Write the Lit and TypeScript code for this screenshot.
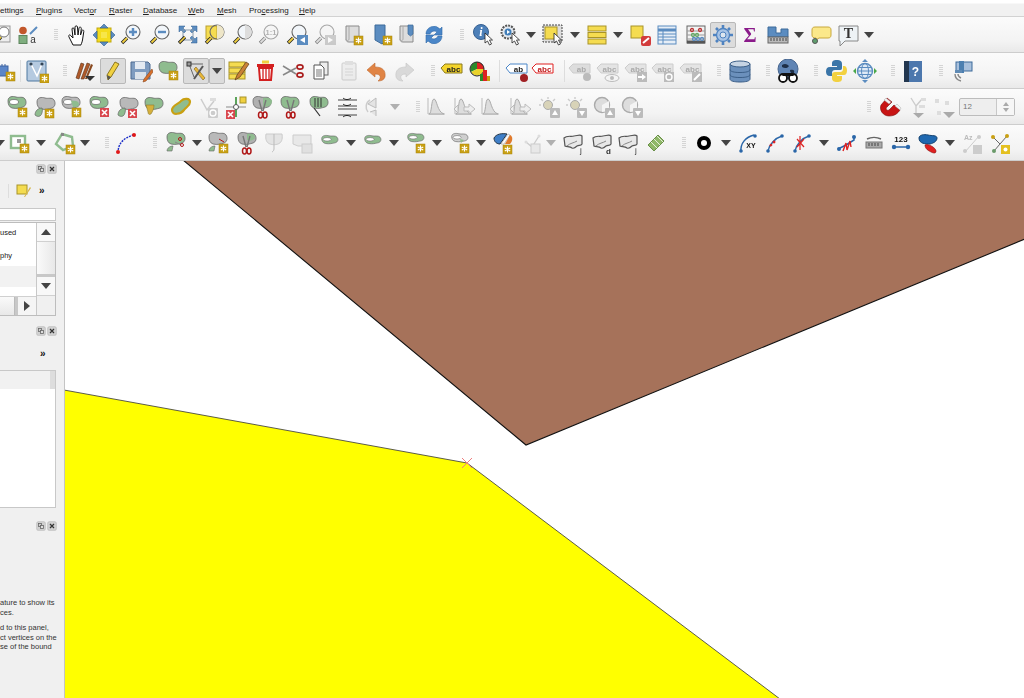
import { LitElement, html, css, svg, nothing } from 'lit';
import { customElement } from 'lit/decorators.js';

const G = '#8fbc8f';
const BLUE = '#5b8cc0';
const YEL = '#f5dc50';

// small shared drawing parts, all in a 24x24 box
const blob = (fill = G, tf = '') =>
  svg`<path transform=${tf} d="M3 8C3 3 8 3 11 4s7-1 9 2c2 3 1 7-2 8-4 1-6 2-11 1-3-1-4-4-4-7Z" fill=${fill} stroke="#666" stroke-width=".8"/>`;
const ring = (tf = '', fill = G) =>
  svg`<g transform=${tf}>${blob(fill)}<ellipse cx="9" cy="9" rx="4.5" ry="2.500" fill="#fff" stroke="#666" stroke-width=".7"/></g>`;
const grayGreen = () =>
  svg`${blob('#b9b9b9', 'translate(2,-1)')}<path d="M3 20c0-4 3-7 7-7 1 2 0 7-2 8s-4 0-5-1Z" fill=${G} stroke="#666" stroke-width=".7"/>`;
const star = (x = 14, y = 14) =>
  svg`<rect x=${x} y=${y} width="9" height="9" fill="#c9a012" stroke="#a88510" stroke-width=".5"/><path d=${`M${x + 4.5} ${y + 1.5}v6M${x + 1.8} ${y + 3}l5.4 3M${x + 7.2} ${y + 3}l-5.4 3`} stroke="#fff" stroke-width="1.2"/>`;
const redX = (x = 14, y = 14) =>
  svg`<rect x=${x} y=${y} width="9" height="9" fill="#d9484f"/><path d=${`M${x + 2} ${y + 2}l5 5M${x + 7} ${y + 2}l-5 5`} stroke="#fff" stroke-width="1.6"/>`;
const mag = (inner: unknown = nothing, fill = '#f2f6fa') =>
  svg`<path d="M8 15 3 20" stroke="#222" stroke-width="3.4"/><path d="M8 15 3.5 19.5" stroke="#f0cf40" stroke-width="1.8"/><circle cx="14" cy="9" r="7" fill=${fill} stroke="#666" stroke-width="1.1"/>${inner}`;
const cursor = (x = 13, y = 10) =>
  svg`<path transform=${`translate(${x},${y})`} d="M0 0v10l2.5-2 2 4 2-1-2-4h3Z" fill="#fff" stroke="#222" stroke-width=".8"/>`;
const scissors = (x = 0, y = 0, c = '#b01818') =>
  svg`<g transform=${`translate(${x},${y})`}><path d="M8 1 11 12M15 1 12 12" stroke="#777" stroke-width="1.4"/><ellipse cx="9.5" cy="16" rx="2" ry="3" fill="none" stroke=${c} stroke-width="1.5"/><ellipse cx="14" cy="16" rx="2" ry="3" fill="none" stroke=${c} stroke-width="1.5"/></g>`;
const page = (f = '#ddd') =>
  svg`<path d="M5 3h13v16H8c-2 0-3-1-3-3Z" fill=${f} stroke="#8a8a8a"/><path d="M8 3v13c0 2-3 2-3 0" fill="none" stroke="#aaa"/>`;
const tag = (fill: string, stroke: string, txt = 'abc', col = '#222') =>
  svg`<path d="M1 9 5 5h17v9H5Z" fill=${fill} stroke=${stroke}/><text x="13.5" y="12.6" text-anchor="middle" font-family="Liberation Sans" font-weight="700" font-size="8" fill=${col}>${txt}</text>`;
const hist = () =>
  svg`<path d="M3 3v16h17" fill="none" stroke="#bbb"/><path d="M4 19C7 19 6 4 9 4s3 13 10 15Z" fill="#ddd" stroke="#aaa"/>`;
const sun = () =>
  svg`<circle cx="11" cy="10" r="4.5" fill="#d8d3b8" stroke="#aaa"/><path d="M11 2v2M4 4l2 2M18 4l-2 2M2 10h2" stroke="#ccc" stroke-width="1.4"/>`;
const badge = (up: boolean) =>
  svg`<rect x="13" y="13" width="10" height="10" rx="1" fill="#bbb"/><path d=${up ? 'M18 15l3 5h-6Z' : 'M18 21l3-5h-6Z'} fill="#fff"/>`;
const disc = () =>
  svg`<circle cx="10" cy="10" r="7.5" fill="#ddd" stroke="#aaa" stroke-width="1.4"/><path d="M10 10 17 6v10l-7 1Z" fill="#f4f4f4"/>`;
const nodeLine = (c = '#2a66a8') =>
  svg`<circle cx="5" cy="20" r="1.8" fill=${c}/><circle cx="19" cy="5" r="1.8" fill=${c}/>`;
const wavy = () =>
  svg`<path d="M3 7c3-3 7-1 10-2 3 0 6-2 8 0v8c-1 2-3 1-5 2-2 2-3 3-5 2-2-2-5-1-7-2Z" fill="#e8e8e8" stroke="#555" stroke-width="1.200"/><path d="M6 15c3-3 7-3 10-5" fill="none" stroke="#888"/>`;

const ICONS: Record<string, () => unknown> = {
  tips: () => svg`<rect x="2" y="3" width="15" height="16" fill="#eee" stroke="#999"/><circle cx="11" cy="9" r="5" fill="#fff" stroke="#777"/><path d="M8 14l-5 6" stroke="#222" stroke-width="3"/><path d="M8 14l-5 6" stroke="#e9c93c" stroke-width="1.5"/>`,
  style: () => svg`<circle cx="7" cy="7.5" r="3.8" fill="#c2572b"/><path d="M14 11 21 4" stroke=${BLUE} stroke-width="2"/><rect x="3" y="12.5" width="8" height="8" fill="#7fae7f" stroke="#5d855d"/><text x="17" y="20" text-anchor="middle" font-family="Liberation Sans" font-size="10" fill="#333">a</text>`,
  hand: () => svg`<path d="M8 22 4 14c-1-2 1-3 2-1l2 2L7 6c0-1.5 2-1.5 2.2 0L10 12V4c0-1.5 2.500-1.500 2.500 0L13 12l1-7c.3-1.500 2.500-1 2.300.5L15.500 12 17 7.500c.5-1 2-.5 1.800 1L17.500 17c-.5 3-1.500 4-1.500 5Z" fill="#fff" stroke="#111" stroke-width="1"/>`,
  panSel: () => svg`<rect x="5" y="5" width="14" height="14" fill="#f4dc1c" stroke="#c0a810"/><rect x="9" y="9" width="6" height="6" fill="#f7e64a"/><path d="M12 1l4 4H8ZM12 23l4-4H8ZM1 12l4-4v8ZM23 12l-4-4v8Z" fill=${BLUE} stroke="#30608f" stroke-width=".6"/>`,
  zoomIn: () => mag(svg`<path d="M14 5v8M10 9h8" stroke=${BLUE} stroke-width="2.400"/>`),
  zoomOut: () => mag(svg`<path d="M10 9h8" stroke=${BLUE} stroke-width="2.400"/>`),
  zoomFull: () => svg`<path d="M3 3h6L7 5l3 3-2 2-3-3-2 2ZM21 3h-6l2 2-3 3 2 2 3-3 2 2ZM21 20h-6l2-2-3-3 2-2 3 3 2-2Z" fill=${BLUE} stroke="#2f5f90" stroke-width=".5"/><rect x="7" y="7" width="10" height="10" fill="none" stroke="#89a"/><path d="M9 14 3 20" stroke="#222" stroke-width="3.200"/><path d="M9 14 3.500 19.500" stroke="#f0cf40" stroke-width="1.600"/>`,
  zoomSel: () => svg`<rect x="3" y="3" width="11" height="13" fill=${YEL} stroke="#b9a030"/>${mag(svg`<path d="M14 2a7 7 0 0 1 0 14Z" fill="#eee6c8"/>`, 'none')}`,
  zoomLayer: () => mag(svg`<path d="M14 2a7 7 0 0 1 0 14Z" fill="#ddd"/>`),
  zoomNative: () => mag(svg`<text x="14" y="12" text-anchor="middle" font-family="Liberation Sans" font-weight="700" font-size="7.500" fill="#777">1:1</text>`),
  zoomLast: () => svg`${mag()}<rect x="12" y="12" width="11" height="10" fill=${BLUE}/><path d="M20 14v6l-5-3Z" fill="#fff"/>`,
  zoomNext: () => svg`${mag()}<rect x="12" y="12" width="11" height="10" fill="#aaa"/><path d="M15 14v6l5-3Z" fill="#fff"/>`,
  mapView: () => svg`${page()}${star(13, 13)}`,
  bookmark: () => svg`<path d="M5 2h10v16l-3 3-7-4Z" fill=${BLUE} stroke="#3c6a9a"/>${star(13, 13)}`,
  bookmarks: () => svg`${page()}<path d="M13 2h5v9l-2.500 2-2.500-2Z" fill=${BLUE} stroke="#3c6a9a" stroke-width=".7"/>`,
  refresh: () => svg`<path d="M4 11a8 8 0 0 1 14-5l2-2v8h-8l3-3a4.500 4.500 0 0 0-7 2ZM20 13a8 8 0 0 1-14 5l-2 2v-8h8l-3 3a4.500 4.500 0 0 0 7-2Z" fill="#4a86c8" stroke="#2f6aa8" stroke-width=".6"/>`,
  identify: () => svg`<circle cx="10" cy="9" r="7.500" fill="#4c7fb8" stroke="#355f90"/><text x="10" y="13" text-anchor="middle" font-family="Liberation Serif" font-style="italic" font-weight="700" font-size="12" fill="#fff">i</text>${cursor(14, 10)}`,
  action: () => svg`<circle cx="10" cy="9" r="6.500" fill="#e4e9ef" stroke="#555" stroke-width="2" stroke-dasharray="2 1"/><circle cx="10" cy="9" r="3.500" fill="#3f7db8"/><path d="M9 7v4l3-2Z" fill="#fff"/>${cursor(14, 10)}`,
  select: () => svg`<rect x="2" y="2" width="19" height="17" fill="#ddd" stroke="#444" stroke-dasharray="2 1"/><rect x="4" y="4" width="12" height="12" fill=${YEL} stroke="#a89328"/>${cursor(13, 10)}`,
  selectAttr: () => svg`<g fill=${YEL} stroke="#a89328"><rect x="3" y="3" width="18" height="5"/><rect x="3" y="9.500" width="18" height="5"/><rect x="3" y="16" width="18" height="5"/></g>`,
  deselect: () => svg`<rect x="3" y="3" width="12" height="12" fill=${YEL} stroke="#a89328"/><rect x="13" y="13" width="10" height="10" rx="2" fill="#d23c3c"/><path d="M15 20l6-5" stroke="#fff" stroke-width="2"/>`,
  table: () => svg`<rect x="3" y="3" width="18" height="18" fill="#e6eef7" stroke=${BLUE}/><path d="M3 7h18" stroke=${BLUE} stroke-width="3"/><path d="M3 11h18M3 14h18M3 17h18M8 8v13" stroke=${BLUE}/>`,
  abacus: () => svg`<rect x="3" y="3" width="18" height="17" fill="#f2f2f2" stroke="#666"/><path d="M3 19h18" stroke="#555" stroke-width="3"/><path d="M3 8h18M3 12h18M3 16h18" stroke="#999"/><g fill="none" stroke-width="1.300"><g stroke="#b33"><circle cx="8" cy="7" r="1.500"/><circle cx="16" cy="7" r="1.500"/></g><g stroke="#6a6"><circle cx="9" cy="12" r="1.500"/><circle cx="13" cy="12" r="1.500"/></g><g stroke=${BLUE}><circle cx="10" cy="16" r="1.500"/><circle cx="14" cy="16" r="1.500"/><circle cx="18" cy="16" r="1.500"/></g></g>`,
  gear: () => svg`<circle cx="12" cy="12" r="6.500" fill="#a8c4e6" stroke="#4f83c0" stroke-width="1.300"/><circle cx="12" cy="12" r="3" fill="#dde6ef" stroke="#4f83c0"/><path d="M12 2v3M12 19v3M2 12h3M19 12h3M5 5l2 2M17 17l2 2M19 5l-2 2M7 17l-2 2" stroke="#4f83c0" stroke-width="2.600"/>`,
  sigma: () => svg`<text x="12" y="19" text-anchor="middle" font-family="Liberation Serif" font-weight="700" font-size="20" fill="#8a1a8a">Σ</text>`,
  measure: () => svg`<path d="M2 4h8v6h5V6h7v8H2Z" fill=${BLUE} stroke="#3c6a9a"/><rect x="2" y="14" width="20" height="6" fill="#bbb" stroke="#666"/><path d="M5 15v3M8 15v3M11 15v3M14 15v3M17 15v3M20 15v3" stroke="#444"/>`,
  tip: () => svg`<path d="M3 7c0-2 1-3 3-3h13c2 0 3 1 3 3v5c0 2-1 3-3 3H10l-3 2v-2c-3 0-4-1-4-3Z" fill="#fbe88a" stroke="#c8a83c"/><circle cx="6" cy="18" r="2.500" fill="#5f9e6e" stroke="#555"/>`,
  annot: () => svg`<path d="M3 3h19v15H9l-5 5v-5H3Z" fill="#eef3f6" stroke="#888"/><text x="12.500" y="15" text-anchor="middle" font-family="Liberation Serif" font-weight="700" font-size="14" fill="#333">T</text>`,

  chip: () => svg`<rect x="1" y="7" width="14" height="10" fill="#5b86c8" stroke="#3c62a0"/><path d="M3 5v2M6 5v2M9 5v2M12 5v2M3 17v2M6 17v2" stroke="#3c62a0"/>${star(13, 13)}`,
  vertex: () => svg`<rect x="2" y="2" width="19" height="20" rx="1" fill="#b5cae0" stroke="#4f78a0"/><path d="M6 5 12 17 17 5" fill="none" stroke="#fff" stroke-width="1.500"/><circle cx="6" cy="5" r="1.600" fill="#345"/><circle cx="17" cy="5" r="1.600" fill="#345"/>${star(15, 15)}`,
  pencils: () => svg`<path d="M3 19 8 4l3 1-5 15ZM8 20 14 4l3 1-6 15Z" fill="#b05a2a" stroke="#5a3016" stroke-width=".6"/><path d="M12 20 18 5l2 1-6 14Z" fill="#8a4a20"/><path d="M12 17h10l-5 5Z" fill="#333"/>`,
  pencil: () => svg`<path d="M7 21 6 16 14 3l4 2-8 13Z" fill="#f0d040" stroke="#8a7420"/><path d="M7 21l-1-5 4 2Z" fill="#555"/>`,
  save: () => svg`<path d="M2 3h17l2 2v15H2Z" fill="#7f9cc0" stroke="#4f6a90"/><rect x="6" y="3" width="10" height="7" fill="#e4eaf2"/><rect x="6" y="13" width="11" height="7" fill="#dbe2ea"/><path d="M23 10 15 20l-1 3 3-1 7-9Z" fill="#d8702c" stroke="#8a4a20" stroke-width=".6"/>`,
  addPoly: () => svg`${blob(G, 'translate(0,-1)')}${star(13, 12)}`,
  digitize: () => svg`<path d="M5 5 10 18M5 5h14" stroke="#666"/><rect x="3" y="3" width="4" height="4" fill="#999" stroke="#333"/><path d="M12 8 21 19l-2 2L10 10Z" fill="#e9b838" stroke="#7a6020" stroke-width=".6"/><path d="M19 7 10 20" stroke="#555" stroke-width="2"/>`,
  multiEdit: () => svg`<g fill=${YEL} stroke="#a89328"><rect x="2" y="3" width="16" height="5"/><rect x="2" y="9" width="16" height="5"/><rect x="2" y="15" width="16" height="5"/></g><path d="M8 21 10 16 19 3l3 2-9 13Z" fill="#c98238" stroke="#5a3a16" stroke-width=".7"/>`,
  trash: () => svg`<rect x="8" y="1.500" width="7" height="3" fill="#f0d040"/><path d="M3 5h17v3H3Z" fill="#d32020"/><path d="M5 9h13l-1 12H6Z" fill="#fff" stroke="#d32020" stroke-width="2"/><path d="M9 10v10M12 10v10M15 10v10" stroke="#d32020" stroke-width="1.300"/>`,
  scissors: () => svg`<path d="M1 7 14 15M1 16 14 9" stroke="#888" stroke-width="1.500"/><ellipse cx="18" cy="8" rx="3" ry="2.200" fill="none" stroke="#aa1c1c" stroke-width="1.700"/><ellipse cx="18" cy="16" rx="3" ry="2.200" fill="none" stroke="#aa1c1c" stroke-width="1.700"/>`,
  copy: () => svg`<rect x="11" y="3" width="8" height="13" fill="#eee" stroke="#666"/><path d="M5 6h7l3 3v11H5Z" fill="#fff" stroke="#555"/><path d="M7 11h6M7 13h6M7 15h6M7 17h6" stroke="#777"/>`,
  paste: () => svg`<rect x="5" y="4" width="14" height="17" rx="1" fill="#e6e6e6" stroke="#aaa"/><rect x="8" y="2" width="8" height="4" fill="#ccc"/><path d="M8 10h8M8 13h8M8 16h8" stroke="#bbb"/>`,
  undo: () => svg`<path d="M2 11 10 4v4c7 0 11 3 10 10-1 3-4 4-7 4 3-2 4-7-3-7v3Z" fill="#e08445" stroke="#c06a30" stroke-width=".6"/>`,
  redo: () => svg`<path d="M22 11 14 4v4C7 8 3 11 4 18c1 3 4 4 7 4-3-2-4-7 3-7v3Z" fill="#d9d9d9" stroke="#c4c4c4" stroke-width=".6"/>`,
  abcYel: () => tag('#f4d42c', '#8a7a20'),
  pie: () => svg`<path d="M9 3a7 7 0 0 1 7 7H9Z" fill="#d22"/><path d="M9 10V3a7 7 0 0 0-6 10Z" fill="#2a8a2a"/><path d="M9 10H16a7 7 0 0 1-13 3Z" fill="#e9d22c"/><circle cx="9" cy="10" r="7" fill="none" stroke="#222"/><rect x="12" y="15" width="3" height="7" fill="#2a8a2a"/><rect x="15" y="11" width="4" height="11" fill="#d22"/><rect x="19" y="17" width="3" height="5" fill="#c8a012"/>`,
  abPin: () => svg`${tag('#fff', '#4a86c8', 'ab')}<path d="M19 14v5" stroke="#888"/><circle cx="19" cy="19" r="4" fill="#a02024"/>`,
  abcRed: () => tag('#fff', '#e02020', 'abc', '#c01818'),
  lblPin: () => svg`${tag('#ddd', '#ccc', 'ab', '#aaa')}<circle cx="19" cy="18" r="4" fill="#bbb"/>`,
  lblEye: () => svg`${tag('#e4e4e4', '#ccc', 'abc', '#aaa')}<ellipse cx="16" cy="19" rx="7" ry="3.500" fill="#f4f4f4" stroke="#bbb"/><circle cx="16" cy="19" r="2" fill="#bbb"/>`,
  lblMove: () => svg`${tag('#e4e4e4', '#ccc', 'abc', '#aaa')}<rect x="13" y="13" width="10" height="10" fill="#bbb"/><path d="M14 17h4v-2l4 3-4 3v-2h-4Z" fill="#fff"/>`,
  lblRot: () => svg`${tag('#e4e4e4', '#ccc', 'abc', '#aaa')}<rect x="13" y="13" width="10" height="10" fill="#bbb"/><circle cx="18" cy="18" r="3" fill="none" stroke="#fff" stroke-width="1.400"/>`,
  lblEdit: () => svg`${tag('#e4e4e4', '#ccc', 'abc', '#aaa')}<rect x="13" y="13" width="10" height="10" fill="#bbb"/><path d="M15 21l6-6" stroke="#fff" stroke-width="2"/>`,
  db: () => svg`<path d="M2 5v15c0 2 4 3 10 3s10-1 10-3V5Z" fill="#6b90bc" stroke="#3c5f88"/><ellipse cx="12" cy="5" rx="10" ry="3" fill="#c6d4e4" stroke="#3c5f88"/><path d="M2 10.500c0 2 4 3 10 3s10-1 10-3M2 15.500c0 2 4 3 10 3s10-1 10-3" fill="none" stroke="#3c5f88"/>`,
  globe: () => svg`<circle cx="12" cy="10" r="10" fill="#5f84b4" stroke="#44638c"/><path d="M6 6c3-2 5-1 7 1-1 2-4 3-7 1ZM14 11c3-1 5 0 4 3-2 1-4 0-4-3Z" fill="#1e2f48"/><circle cx="7" cy="19" r="4" fill="#fff" stroke="#111" stroke-width="1.800"/><circle cx="17" cy="19" r="4" fill="#fff" stroke="#111" stroke-width="1.800"/><path d="M8 14h8l2 3H6Z" fill="#111"/>`,
  python: () => svg`<path d="M12 1C8 1 7 2 7 5v2h5v1H5C2 8 1 10 1 12.500S2 17 5 17h2v-3c0-2 1-3 3-3h5c2 0 2-1 2-3V5c0-3-2-4-5-4Z" fill="#3a75a8"/><path d="M12 23c4 0 5-1 5-4v-2h-5v-1h7c2 0 3-2 3-4.500S21 7 19 7h-1v3c0 2-1 3-3 3h-5c-2 0-3 1-3 3v3c0 3 2 4 5 4Z" fill="#f2d140"/>`,
  globeArrows: () => svg`<circle cx="12" cy="12" r="7.500" fill="#dfeaf6" stroke=${BLUE} stroke-width="1.400"/><ellipse cx="12" cy="12" rx="3.500" ry="7.500" fill="none" stroke=${BLUE}/><path d="M4.500 12h15M5.500 8.500h13M5.500 15.500h13" stroke=${BLUE}/><path d="M12 0l3 3H9ZM12 24l3-3H9Z" fill=${BLUE}/><path d="M0 12l3-3v6ZM24 12l-3-3v6Z" fill="#4aa84a"/>`,
  help: () => svg`<rect x="3" y="2" width="18" height="21" fill="#4c77ad"/><rect x="3" y="2" width="5" height="21" fill="#22364f"/><text x="14.500" y="17" text-anchor="middle" font-family="Liberation Sans" font-weight="700" font-size="12" fill="#fff">?</text>`,
  screen: () => svg`<rect x="6" y="3" width="16" height="9" fill="#a8c0dc" stroke="#3c6a9a"/><rect x="9" y="2" width="5" height="12" fill="#4c7fb0"/><rect x="5" y="11" width="7" height="3" fill="#5f8ab4"/><path d="M5 15c0 3 2 6 6 7M8 15c0 2 1 3 3 4" fill="none" stroke="#888" stroke-width="1.400"/>`,

  r1: () => svg`${ring('translate(0,-2)')}${star(13, 13)}`,
  r2: () => svg`${grayGreen()}${star(13, 14)}`,
  r3: () => svg`${ring('translate(0,-2)', '#b9b9b9')}<path d="M12 6c4-1 8 0 8 3s-3 3-6 3Z" fill=${G}/>${star(13, 13)}`,
  r4: () => svg`${ring('translate(0,-2)')}${redX(13, 13)}`,
  r5: () => svg`${grayGreen()}${redX(13, 14)}`,
  reshape: () => svg`${blob(G, 'translate(0,-1)')}<path d="M4 10h8c0 3-1 6-3 9-2 1-3 0-3-2Z" fill="#d6b03c" stroke="#8a7a30" stroke-width=".6"/>`,
  offset: () => svg`<path d="M3 15c0-5 7-6 9-9 3-3 9-3 9 1 0 4-4 5-6 8-3 4-12 6-12 0Z" fill=${G} stroke="#c9a012" stroke-width="2.200"/>`,
  sync: () => svg`<path d="M5 4 11 15 18 6" fill="none" stroke="#ccc" stroke-width="1.500"/><rect x="14" y="3" width="6" height="3" fill="#ddd"/><rect x="12" y="13" width="10" height="10" rx="1" fill="#ccc"/><circle cx="17" cy="18" r="3" fill="none" stroke="#fff" stroke-width="1.300"/>`,
  moveNode: () => svg`<path d="M2 12h20" stroke="#aaa" stroke-width="1.400"/><path d="M12 2v20" stroke="#4a9a4a" stroke-width="1.800"/><circle cx="12" cy="12" r="2.500" fill="#fff" stroke="#555"/><rect x="16" y="2" width="6" height="6" fill="#f0d040" stroke="#a89328"/>${redX(2, 15)}`,
  split1: () => svg`${blob('#b0b0b0', 'translate(-1,-2)')}<path d="M12 3c4-1 9 0 9 3s-2 6-9 6Z" fill=${G}/>${scissors(0, 4)}`,
  split2: () => svg`${blob(G, 'translate(-1,-2)')}${scissors(0, 4)}`,
  merge: () => svg`${blob(G, 'translate(0,-2)')}<path d="M8 3v9M11 3v9M14 3v9" stroke="#333"/><path d="M7 13l6 8" stroke="#333" stroke-width="1.200"/>`,
  align: () => svg`<path d="M3 5h19M3 11h19M3 14h19M3 20h19" stroke="#444"/><path d="M8 3c2 2 6 2 8 0M8 9c2 2 6 2 8 0M8 22c2-2 6-2 8 0" fill="none" stroke="#222"/>`,
  rotate: () => svg`<path d="M14 3v10L6 9ZM14 21v-6l-6 2" fill="#e4e4e4" stroke="#bbb"/><path d="M6 17a8 8 0 0 1 2-12" fill="none" stroke="#ccc" stroke-width="1.500"/>`,
  hist,
  histMove: () => svg`${hist()}<path d="M12 12h5V9l6 5-6 5v-3h-5Z" fill="#eee" stroke="#bbb"/><path d="M6 10 2 14l4 4Z" fill="#eee" stroke="#bbb"/>`,
  sunUp: () => svg`${sun()}${badge(true)}`,
  sunDown: () => svg`${sun()}${badge(false)}`,
  discUp: () => svg`${disc()}${badge(true)}`,
  discDown: () => svg`${disc()}${badge(false)}`,
  magnet: () => svg`<path d="M9 3 3 10c-2 5 2 11 8 11s9-3 11-6l-6-5-5 5c-2 1-4-1-2-3l5-5Z" fill="#c81414" stroke="#7a0c0c" stroke-width=".6"/><path d="M8 3l5 4-2 2-5-4ZM22 15l-5-4 2-2 4 4Z" fill="#f2f2f2" stroke="#999" stroke-width=".4"/>`,
  treeDis: () => svg`<path d="M6 3 11 11M11 11l6-7M11 11v8" stroke="#ccc" stroke-width="1.400"/><rect x="16" y="3" width="5" height="3" fill="#ddd"/><rect x="14" y="10" width="6" height="3" fill="#ddd"/><path d="M8 18h11l-5.500 5Z" fill="#aaa"/>`,
  snapDis: () => svg`<rect x="2" y="4" width="4" height="4" fill="#ddd"/><rect x="12" y="6" width="4" height="4" fill="#ddd"/><rect x="4" y="16" width="4" height="4" fill="#ddd"/><path d="M10 17h12l-6 6Z" fill="#aaa"/>`,

  rect: () => svg`<rect x="3" y="5" width="14" height="12" fill="#fff" stroke=${G} stroke-width="2.400"/><rect x="9" y="8" width="4" height="4" fill="#999"/>${star(12, 13)}`,
  hexa: () => svg`<path d="M9 3 19 6l1 9-10 4-7-6Z" fill="none" stroke=${G} stroke-width="2.400"/><rect x="8" y="2" width="3" height="3" fill="#888"/>${star(13, 14)}`,
  curve: () => svg`<path d="M3 22C3 12 9 7 18 4" fill="none" stroke="#1a2cc8" stroke-width="1.400" stroke-dasharray="2 1"/><circle cx="3" cy="21" r="2" fill="#e01818"/><circle cx="19" cy="4" r="2" fill="#e01818"/>`,
  splitP: () => svg`${blob(G, 'translate(0,-2)')}<path d="M3 20c0-3 3-5 6-5l-1 5Z" fill=${G} stroke="#666" stroke-width=".6"/><path d="M11 11l6 3" stroke="#888"/><circle cx="16" cy="8" r="1.500" fill="none" stroke="#b01818"/><circle cx="18" cy="14" r="1.500" fill="none" stroke="#b01818"/>`,
  splitS: () => svg`${blob('#b9b9b9', 'translate(0,-2)')}<path d="M3 20c0-3 3-5 6-5l-1 5Z" fill=${G} stroke="#666" stroke-width=".6"/>${star(13, 13)}<path d="M13 8l5 3" stroke="#b01818"/>`,
  splitG: () => svg`${blob('#b0b0b0', 'translate(0,-2)')}<path d="M12 3c4-1 8 0 8 3s-4 4-8 3Z" fill=${G}/>${scissors(0, 4)}`,
  mergeD: () => svg`<path d="M4 3h16c1 6-1 9-4 10-3 1-5 1-8 0-3-1-5-4-4-10Z" fill="#e4e4e4" stroke="#ccc"/><path d="M12 3v15c0 2-2 3-2 3" fill="none" stroke="#bbb"/>`,
  mergeA: () => svg`<path d="M3 4h18v9l-6 2H8l-5-2Z" fill="#e8e8e8" stroke="#ccc"/><rect x="12" y="13" width="10" height="9" fill="#e0e0e0" stroke="#ccc"/>`,
  ringS: () => svg`${ring('translate(1,2) scale(.9,.7)')}`,
  ringStar: () => svg`${ring('translate(1,0) scale(.9,.7)')}${star(12, 13)}`,
  ringGray: () => svg`${ring('translate(1,0) scale(.9,.7)', '#cfcfcf')}<path d="M12 8l4 1-3 3Z" fill=${G}/>${star(12, 13)}`,
  splash: () => svg`<path d="M3 7c2-4 8-5 13-4l-7 10C6 13 3 11 3 7Z" fill="#3f7fc8" stroke="#234"/><path d="M10 13l7-10 2 1-6 9Z" fill="#fff" stroke="#888" stroke-width=".5"/><path d="M14 13l5-9c3 1 3 6 0 9Z" fill="#e07a2c"/>${star(12, 14)}`,
  nodeAdd: () => svg`<path d="M5 11 11 16 18 5M11 16v5" fill="none" stroke="#ccc" stroke-width="1.300"/><circle cx="5" cy="11" r="1.500" fill="#ddd"/><circle cx="18" cy="5" r="1.500" fill="#ddd"/><rect x="10" y="13" width="9" height="9" fill="#e8e8e8" stroke="#ccc"/>`,
  geoI: () => svg`${wavy()}<text x="19" y="22" font-family="Liberation Sans" font-size="8" fill="#333">j</text>`,
  geoD: () => svg`${wavy()}<text x="16" y="23" font-family="Liberation Sans" font-weight="700" font-size="8" fill="#333">d</text>`,
  leaf: () => svg`<path d="M4 14 14 4l6 6-10 10Z" fill="#8fb868" stroke="#6a9048"/><path d="M7 11l6 6M10 8l6 6M13 5l6 6" stroke="#e6efda"/>`,
  bigO: () => svg`<circle cx="12" cy="12" r="5" fill="#fff" stroke="#000" stroke-width="4"/>`,
  xy: () => svg`<path d="M5 21C4 12 10 6 18 4" fill="none" stroke="#2a66a8" stroke-width="1.500"/><circle cx="5" cy="20" r="1.800" fill="#2a66a8"/><circle cx="19" cy="5" r="1.800" fill="#2a66a8"/><text x="15" y="17" text-anchor="middle" font-family="Liberation Sans" font-weight="700" font-size="7" fill="#111">XY</text>`,
  redSeg: () => svg`<path d="M5 20C6 14 12 7 19 5" fill="none" stroke="#2a66a8" stroke-width="1.500"/>${nodeLine()}<path d="M7 15 13 9" stroke="#d22" stroke-width="2.400" stroke-dasharray="2.500 2"/>`,
  redCross: () => svg`<path d="M5 20C6 14 12 7 19 5" fill="none" stroke="#2a66a8" stroke-width="1.500"/>${nodeLine()}<path d="M7 8 14 16M14 8 7 16M10 5v14" stroke="#d22" stroke-width="1.200"/>`,
  spring: () => svg`<path d="M3 18 11 14l8-5V5" fill="none" stroke="#2a66a8" stroke-width="1.500"/><path d="M8 20l3-8 1 7 3-9 1 6" fill="none" stroke="#d22" stroke-width="1.400"/><circle cx="4" cy="18" r="2" fill="#2a66a8"/><circle cx="19" cy="6" r="2" fill="#2a66a8"/>`,
  arcBar: () => svg`<path d="M5 8c4-2 10-2 14 0" fill="none" stroke="#666" stroke-width="1.400"/><rect x="4" y="11" width="16" height="6" fill="#aaa" stroke="#777"/><path d="M7 12v3M10 12v3M13 12v3M16 12v3" stroke="#444"/>`,
  n123: () => svg`<text x="12" y="11" text-anchor="middle" font-family="Liberation Sans" font-weight="700" font-size="8" fill="#111">123</text><path d="M5 16h14" stroke="#2a66a8" stroke-width="1.500"/><circle cx="5" cy="16" r="2.200" fill="#2a66a8"/><circle cx="19" cy="16" r="2.200" fill="#2a66a8"/>`,
  blueRed: () => svg`<path d="M3 7c0-3 5-4 9-3s9 0 9 3-3 5-7 6c-4 0-11 0-11-6Z" fill="#1f68b0" stroke="#12406e"/><path d="M9 14c3-2 11 3 11 6s-3 2-5 1-6-3-6-7Z" fill="#e02020" stroke="#801010" stroke-width=".6"/>`,
  azDis: () => svg`<text x="4" y="9" font-family="Liberation Sans" font-weight="700" font-size="7" fill="#bbb">Az</text><path d="M5 21 19 5" stroke="#ccc"/><circle cx="19" cy="6" r="2" fill="#ccc"/><circle cx="5" cy="20" r="2" fill="#ccc"/><rect x="13" y="14" width="9" height="9" fill="#ccc"/>`,
  nodeYel: () => svg`<path d="M5 6 12 13 19 5M12 13l-6 7" fill="none" stroke="#666"/><circle cx="5" cy="6" r="2" fill="#c9a012"/><circle cx="19" cy="5" r="2" fill="#c9a012"/><circle cx="6" cy="20" r="2" fill="#6a9a6a"/><rect x="13" y="14" width="9" height="9" fill="#e4c020"/><circle cx="17.500" cy="18.500" r="2" fill="#fff"/>`,
};

type Item = [number, string, string?];
// x is the centre of each item in page pixels, 'd' greys an icon out, 'p' is a pressed button
const ROWS: Item[][] = [
  [[5, 'tips'], [28, 'style'], [56, '|'], [77, 'hand'], [104, 'panSel'], [131, 'zoomIn'], [160, 'zoomOut'], [188, 'zoomFull'], [215, 'zoomSel'], [243, 'zoomLayer'], [269, 'zoomNative', 'd'], [297, 'zoomLast'], [325, 'zoomNext', 'd'], [353, 'mapView'], [382, 'bookmark'], [407, 'bookmarks'], [434, 'refresh'], [462, '|'], [483, 'identify'], [510, 'action'], [531, 'v'], [553, 'select'], [575, 'v'], [597, 'selectAttr'], [618, 'v'], [640, 'deselect'], [667, 'table'], [696, 'abacus'], [723, 'gear', 'p'], [750, 'sigma'], [778, 'measure'], [799, 'v'], [821, 'tip'], [848, 'annot'], [869, 'v']],
  [[5, 'chip'], [20, '/'], [37, 'vertex'], [65, '|'], [85, 'pencils'], [113, 'pencil', 'p'], [141, 'save'], [168, 'addPoly'], [196, 'digitize', 'p'], [217, 'v', 'p'], [239, 'multiEdit'], [266, 'trash'], [294, 'scissors'], [321, 'copy'], [349, 'paste', 'd'], [377, 'undo'], [404, 'redo'], [433, '|'], [452, 'abcYel'], [480, 'pie'], [499, '/'], [517, 'abPin'], [543, 'abcRed'], [564, '/'], [580, 'lblPin'], [608, 'lblEye'], [636, 'lblMove'], [663, 'lblRot'], [691, 'lblEdit'], [719, '|'], [740, 'db'], [768, '|'], [788, 'globe'], [816, '|'], [837, 'python'], [865, 'globeArrows'], [893, '|'], [913, 'help'], [941, '|'], [962, 'screen']],
  [[17, 'r1'], [44, 'r2'], [71, 'r3'], [99, 'r4'], [127, 'r5'], [154, 'reshape'], [181, 'offset'], [208, 'sync'], [236, 'moveNode'], [263, 'split1'], [291, 'split2'], [319, 'merge'], [347, 'align'], [374, 'rotate'], [395, 'v', 'd'], [418, '|'], [437, 'hist'], [464, 'histMove'], [491, 'hist'], [520, 'histMove'], [549, 'sunUp'], [576, 'sunDown'], [604, 'discUp'], [632, 'discDown'], [869, '|'], [890, 'magnet'], [917, 'treeDis'], [945, 'snapDis'], [987, '#']],
  [[0, 'v'], [20, 'rect'], [41, 'v'], [65, 'hexa'], [85, 'v'], [107, '|'], [127, 'curve'], [155, '|'], [176, 'splitP'], [197, 'v'], [218, 'splitS'], [247, 'splitG'], [274, 'mergeD'], [302, 'mergeA'], [330, 'ringS'], [351, 'v'], [373, 'ringS'], [394, 'v'], [416, 'ringStar'], [437, 'v'], [460, 'ringGray'], [481, 'v'], [503, 'splash'], [533, 'nodeAdd'], [551, 'v', 'd'], [573, 'geoI'], [602, 'geoD'], [628, 'geoI'], [656, 'leaf'], [684, '|'], [704, 'bigO'], [726, 'v'], [748, 'xy'], [775, 'redSeg'], [802, 'redCross'], [824, 'v'], [847, 'spring'], [874, 'arcBar'], [901, 'n123'], [928, 'blueRed'], [950, 'v'], [972, 'azDis'], [1000, 'nodeYel']],
];

const widthOf = (it: Item) => {
  if (it[1] === '|') return 4;
  if (it[1] === '/') return 1;
  if (it[1] === '#') return 56;
  if (it[1] === 'v') return it[2] === 'p' ? 16 : 12;
  return it[2] === 'p' ? 26 : 24;
};

@customElement('app-root')
export class AppRoot extends LitElement {
  renderItem(it: Item, prevEnd: number) {
    const w = widthOf(it);
    const gap = `margin-left:${it[0] - w / 2 - prevEnd}px`;
    const flag = it[2] ?? '';
    if (it[1] === '|') return html`<span class="handle" style=${gap}></span>`;
    if (it[1] === '/') return html`<span class="sep" style=${gap}></span>`;
    if (it[1] === '#')
      return html`<div class="spin" style=${gap}>
        <span class="spin-val">12</span>
        <span class="spin-btns"><i class="up"></i><i class="down"></i></span>
      </div>`;
    if (it[1] === 'v')
      return html`<span class="drop ${flag === 'd' ? 'off' : ''} ${flag === 'p' ? 'down' : ''}" style=${gap}><i></i></span>`;
    return html`<span class="ico ${flag === 'd' ? 'off' : ''} ${flag === 'p' ? 'down' : ''}" style=${gap}>
      <svg viewBox="0 0 24 24" width="24" height="24">${ICONS[it[1]]()}</svg>
    </span>`;
  }

  renderRow(items: Item[]) {
    let end = 0;
    return html`<div class="bar">
      ${items.map((it) => {
        const out = this.renderItem(it, end);
        end = it[0] + widthOf(it) / 2;
        return out;
      })}
    </div>`;
  }

  dockHead() {
    return html`<div class="dock-head">
      <span class="dock-btn"><svg viewBox="0 0 8 8" width="8" height="8"><rect x="1.500" y="1.500" width="3" height="3" fill="none" stroke="#666" stroke-width=".8"/><rect x="3.500" y="3.500" width="3" height="3" fill="#ddd" stroke="#666" stroke-width=".8"/></svg></span>
      <span class="dock-btn"><svg viewBox="0 0 8 8" width="8" height="8"><path d="M2 2l4 4M6 2 2 6" stroke="#333" stroke-width="1.200"/></svg></span>
    </div>`;
  }

  render() {
    const menu = [
      ['', 'ettings', '', 0],
      ['', 'P', 'lugins', 36],
      ['Vect', 'o', 'r', 74],
      ['', 'R', 'aster', 109],
      ['', 'D', 'atabase', 143],
      ['', 'W', 'eb', 188],
      ['', 'M', 'esh', 217],
      ['Pro', 'c', 'essing', 249],
      ['', 'H', 'elp', 299],
    ] as const;
    let menuEnd = 0;
    return html`
      <div class="menu">
        ${menu.map(([a, u, b, x]) => {
          const gap = x - menuEnd;
          menuEnd = x;
          const first = u === 'ettings';
          return html`<span class="menu-item" style="margin-left:${gap}px"><span class="menu-text">${a}${first ? u : html`<u>${u}</u>`}${b}</span></span>`;
        })}
      </div>
      ${ROWS.map((r) => this.renderRow(r))}
      <div class="main">
        <aside class="dock">
          <section class="panel p1">
            ${this.dockHead()}
            <div class="dock-tools">
              <span class="tool-sep"></span>
              <svg viewBox="0 0 16 16" width="16" height="16"><rect x="1" y="2" width="10" height="9" fill="#f4dc50" stroke="#a89328"/><path d="M8 14 14 4l1 1-6 9Z" fill="#d6b84c"/></svg>
              <span class="more">»</span>
            </div>
            <div class="input"></div>
            <div class="tree">
              <div class="tree-view">
                <div class="rows">
                  <div class="row">used</div>
                  <div class="row">phy</div>
                  <div class="row sel"></div>
                </div>
                <div class="hbar">
                  <span class="hthumb"></span>
                  <span class="hend"><i></i></span>
                </div>
              </div>
              <div class="vbar">
                <span class="vbtn"><i class="tri-up"></i></span>
                <span class="vthumb"></span>
                <span class="vbtn"><i class="tri-down"></i></span>
                <span class="corner"></span>
              </div>
            </div>
          </section>
          <section class="panel p2">
            ${this.dockHead()}
            <div class="dock-tools two">
              <span class="more">»</span>
            </div>
            <div class="list"><div class="list-head"><span></span></div></div>
          </section>
          <section class="panel p3">
            ${this.dockHead()}
            <div class="help">
              <p>ature to show its<br />ces.</p>
              <p>d to this panel,<br />ct vertices on the<br />se of the bound</p>
            </div>
          </section>
        </aside>
        <div class="canvas">
          <svg viewBox="65 161 959 537" width="959" height="537">
            <path d="M183 160 526 445 1025 239V160Z" fill="#a6725a" stroke="#111" stroke-width="1.100"/>
            <path d="M64 390 467 463 780 699H64Z" fill="#ff0" stroke="#333" stroke-width=".8"/>
            <path d="M462 458 472 468M472 458 462 468" stroke="#ee7f7f" stroke-width="1"/>
          </svg>
        </div>
      </div>
    `;
  }

  static styles = css`
    :host {
      display: block;
      width: 1024px;
      height: 698px;
      overflow: hidden;
      background: #f0f0f0;
      font-family: 'Liberation Sans', Arial, sans-serif;
      color: #222;
    }
    .menu {
      display: flex;
      align-items: flex-end;
      height: 17px;
      box-sizing: border-box;
      background: linear-gradient(#fff 0 3px, #f1f1f1 4px);
      border-bottom: 1px solid #d2d2d2;
      font-size: 8px;
      line-height: 10px;
      color: #222;
    }
    .menu-item {
      width: 0;
      white-space: nowrap;
    }
    .bar {
      display: flex;
      align-items: center;
      height: 36px;
      box-sizing: border-box;
      background: linear-gradient(#fbfbfb, #f3f3f3 70%, #e9e9e9);
      border-bottom: 1px solid #cdcdcd;
      overflow: hidden;
    }
    .ico {
      flex: none;
      width: 24px;
      height: 24px;
      display: block;
    }
    .ico svg {
      display: block;
      filter: blur(0.25px);
    }
    .ico.off {
      opacity: 0.55;
      filter: grayscale(1);
    }
    .ico.down {
      background: #dcdcdc;
      border: 1px solid #b8b8b8;
      border-radius: 2px;
    }
    .drop {
      flex: none;
      width: 12px;
      display: flex;
      justify-content: center;
    }
    .drop i {
      width: 0;
      height: 0;
      border: 5px solid transparent;
      border-top: 6px solid #444;
      border-bottom: 0;
    }
    .drop.off i {
      border-top-color: #b0b0b0;
    }
    .drop.down {
      width: 14px;
      height: 24px;
      align-items: center;
      background: #dcdcdc;
      border: 1px solid #b8b8b8;
      border-radius: 2px;
    }
    .handle {
      flex: none;
      width: 4px;
      height: 12px;
      background: repeating-linear-gradient(#d4d4d4 0 1px, transparent 1px 2px);
    }
    .sep {
      flex: none;
      width: 1px;
      height: 22px;
      background: #ddd;
    }
    .spin {
      flex: none;
      width: 56px;
      height: 18px;
      box-sizing: border-box;
      display: flex;
      background: #eee;
      border: 1px solid #bcbcbc;
      border-radius: 2px;
      font-size: 8px;
      color: #777;
    }
    .spin-val {
      flex: 1;
      padding: 3px 0 0 3px;
    }
    .spin-btns {
      width: 18px;
      box-sizing: border-box;
      border-left: 1px solid #c8c8c8;
      background: #f6f6f6;
      display: flex;
      flex-direction: column;
      align-items: center;
      justify-content: center;
      gap: 2px;
    }
    .spin-btns i {
      width: 0;
      height: 0;
      border: 3.5px solid transparent;
    }
    .spin-btns .up {
      border-top: 0;
      border-bottom: 4px solid #aaa;
    }
    .spin-btns .down {
      border-bottom: 0;
      border-top: 4px solid #aaa;
    }
    .main {
      display: flex;
      height: 537px;
    }
    .dock {
      flex: none;
      width: 65px;
      box-sizing: border-box;
      background: #f0f0f0;
      border-right: 1px solid #c4c4c4;
      display: flex;
      flex-direction: column;
    }
    .panel {
      box-sizing: border-box;
      padding-right: 8px;
      overflow: hidden;
    }
    .p1 {
      height: 162px;
    }
    .p2 {
      height: 195px;
    }
    .p3 {
      height: 180px;
    }
    .dock-head {
      display: flex;
      justify-content: flex-end;
      gap: 3px;
      height: 8px;
      padding-top: 4px;
      margin-bottom: 4px;
    }
    .dock-btn {
      width: 8px;
      height: 8px;
      background: #cfcfcf;
      border-radius: 1px;
      box-shadow: 0 0 0 0.5px #aaa;
    }
    .dock-btn svg {
      display: block;
    }
    .dock-tools {
      display: flex;
      align-items: center;
      height: 28px;
      padding-left: 8px;
      gap: 7px;
    }
    .dock-tools.two {
      padding-left: 40px;
      height: 30px;
    }
    .tool-sep {
      width: 1px;
      height: 14px;
      background: #ddd;
    }
    .more {
      font-size: 10px;
      font-weight: 700;
      line-height: 10px;
      color: #111;
    }
    .input {
      height: 13px;
      margin-top: 3px;
      background: #fff;
      border: 1px solid #c8c8c8;
      border-left: 0;
      box-sizing: border-box;
    }
    .tree {
      display: flex;
      height: 94px;
      margin-top: 1px;
      border: 1px solid #bdbdbd;
      border-left: 0;
      box-sizing: border-box;
      background: #fff;
    }
    .tree-view {
      flex: 1;
      display: flex;
      flex-direction: column;
      min-width: 0;
    }
    .rows {
      flex: 1;
      font-size: 7.5px;
      padding-top: 3px;
    }
    .row {
      height: 23px;
      line-height: 14px;
    }
    .row.sel {
      background: #f2f2f2;
      margin-top: -6px;
      height: 21px;
    }
    .hbar {
      display: flex;
      height: 18px;
      border-top: 1px solid #d0d0d0;
      background: #f0f0f0;
    }
    .hthumb {
      width: 14px;
      background: linear-gradient(#fafafa, #e8e8e8);
      border-right: 1px solid #bbb;
    }
    .hend {
      flex: 1;
      display: flex;
      align-items: center;
      justify-content: center;
      background: #f5f5f5;
      border-left: 3px solid #c8c8c8;
    }
    .hend i {
      width: 0;
      height: 0;
      border: 5px solid transparent;
      border-left: 6px solid #444;
      border-right: 0;
    }
    .vbar {
      flex: none;
      width: 18px;
      display: flex;
      flex-direction: column;
      border-left: 1px solid #c8c8c8;
      background: #f4f4f4;
    }
    .vbtn {
      height: 18px;
      display: flex;
      align-items: center;
      justify-content: center;
      background: #f8f8f8;
    }
    .tri-up,
    .tri-down {
      width: 0;
      height: 0;
      border: 5px solid transparent;
    }
    .tri-up {
      border-top: 0;
      border-bottom: 6px solid #444;
    }
    .tri-down {
      border-bottom: 0;
      border-top: 6px solid #444;
    }
    .vthumb {
      height: 36px;
      background: linear-gradient(90deg, #fafafa, #e8e8e8);
      border-top: 1px solid #d0d0d0;
      border-bottom: 3px solid #c8c8c8;
      box-sizing: border-box;
    }
    .corner {
      flex: 1;
      background: #f0f0f0;
      border-top: 1px solid #d0d0d0;
    }
    .list {
      height: 138px;
      margin-top: 1px;
      background: #fff;
      border: 1px solid #c8c8c8;
      border-left: 0;
      box-sizing: border-box;
    }
    .list-head {
      display: flex;
      justify-content: flex-end;
      height: 18px;
      background: #f1f1f1;
    }
    .list-head span {
      width: 5px;
      background: #ddd;
    }
    .help {
      margin-top: 68px;
      width: 100px;
      font-size: 7.5px;
      line-height: 9.5px;
      color: #333;
    }
    .help p {
      margin: 0 0 6px;
    }
    .canvas {
      flex: 1;
      background: #fff;
      overflow: hidden;
    }
    .canvas svg {
      display: block;
    }
  `;
}
